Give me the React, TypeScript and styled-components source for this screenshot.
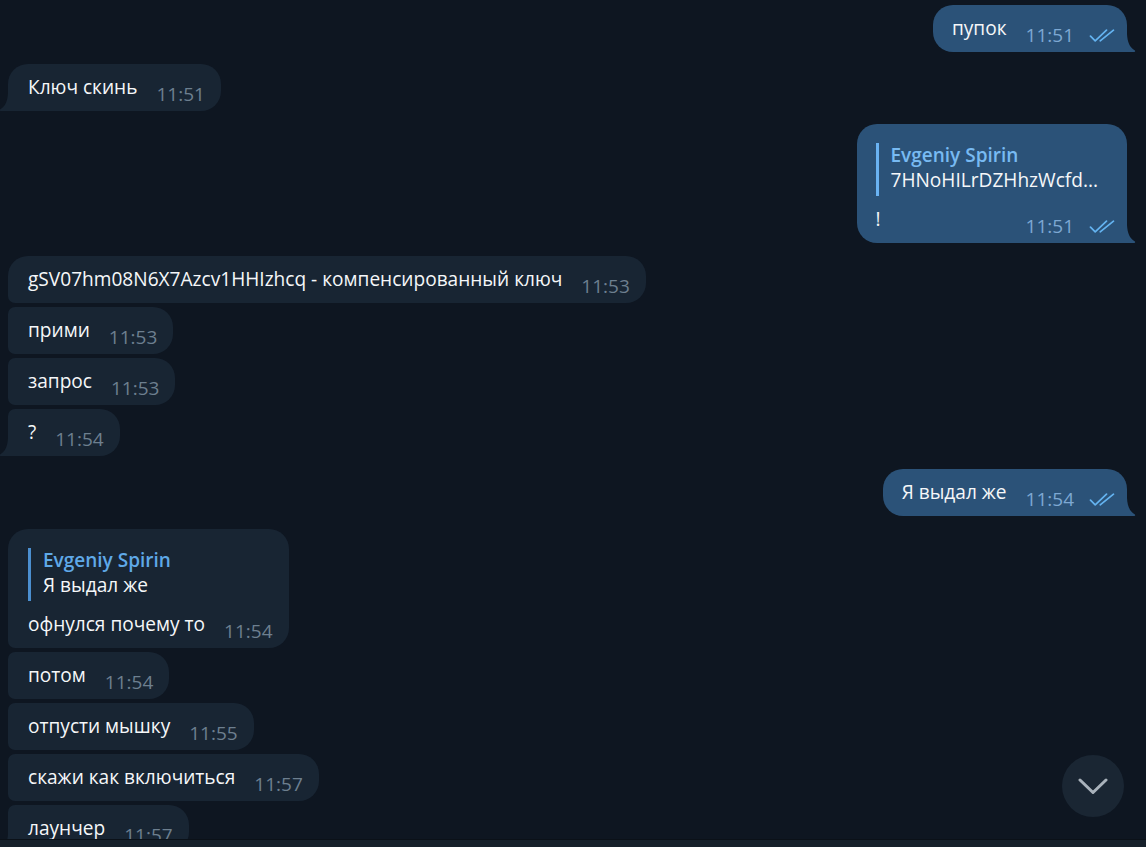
import React, { FC } from "react";
import styled, { createGlobalStyle } from "styled-components";

const GlobalStyle = createGlobalStyle`
  html, body {
    margin: 0;
    padding: 0;
    background: #0e1621;
  }
  body {
    font-family: "Open Sans", "Noto Sans", sans-serif;
    -webkit-font-smoothing: antialiased;
  }
`;

const Screen = styled.div`
  position: relative;
  height: 847px;
  display: flex;
  flex-direction: column;
  overflow: hidden;
  background: #0e1621;
`;

const History = styled.div`
  flex: 1;
  min-height: 0;
  overflow: hidden;
  display: flex;
  flex-direction: column;
  padding: 5px 19px 0 8px;
`;

const Composer = styled.div`
  height: 7px;
  flex-shrink: 0;
  background: #17212b;
  border-top: 1px solid #0b1118;
`;

const Row = styled.div<{ $out?: boolean; $gap: number }>`
  display: flex;
  flex-shrink: 0;
  justify-content: ${(p) => (p.$out ? "flex-end" : "flex-start")};
  margin-top: ${(p) => p.$gap}px;
`;

const BIG = 20;
const SMALL = 7;

const Bubble = styled.div<{ $out?: boolean; $first?: boolean; $last?: boolean }>`
  position: relative;
  background: ${(p) => (p.$out ? "#2b5278" : "#182533")};
  color: #f5f7f9;
  padding: 10px ${(p) => (p.$out ? 12 : 16)}px 7px ${(p) => (p.$out ? 19 : 20)}px;
  border-radius: ${(p) =>
    p.$out
      ? `${BIG}px ${BIG}px 0 ${BIG}px`
      : `${p.$first ? BIG : SMALL}px ${BIG}px ${BIG}px ${p.$last ? 0 : SMALL}px`};
`;

const Tail = styled.svg<{ $out?: boolean }>`
  position: absolute;
  bottom: 0;
  width: 9px;
  height: 18px;
  ${(p) => (p.$out ? "right: -9px;" : "left: -9px; transform: scaleX(-1);")}
`;

const Line = styled.div`
  display: flex;
  align-items: flex-end;
`;

const Text = styled.span`
  font-size: 19.1px;
  line-height: 26px;
  margin-bottom: 4px;
  white-space: nowrap;
`;

const Meta = styled.span<{ $out?: boolean }>`
  display: flex;
  align-items: flex-end;
  gap: 15px;
  margin-left: auto;
  padding-left: 19px;
  font-size: 19px;
  line-height: 20px;
  color: ${(p) => (p.$out ? "#7da8d3" : "#6d7f8f")};
  white-space: nowrap;
`;

const Checks = styled.svg`
  width: 26px;
  height: 13px;
  margin-bottom: 3px;
`;

const Reply = styled.div<{ $out?: boolean }>`
  display: flex;
  flex-direction: column;
  margin: 9px 0 10px;
  padding: 0 17px 3px 12px;
  border-left: 3px solid ${(p) => (p.$out ? "#6ab3f3" : "#4b8fd0")};
`;

const ReplyName = styled.span<{ $out?: boolean }>`
  font-size: 19px;
  font-weight: 600;
  line-height: 25px;
  color: ${(p) => (p.$out ? "#78baf2" : "#5fa9e8")};
  white-space: nowrap;
`;

const ReplyText = styled.span`
  font-size: 19.1px;
  line-height: 25px;
  white-space: nowrap;
`;

const ScrollDown = styled.button`
  position: absolute;
  right: 22px;
  bottom: 30px;
  width: 62px;
  height: 62px;
  border-radius: 50%;
  border: none;
  padding: 0;
  background: #1a2633;
  display: flex;
  align-items: center;
  justify-content: center;
`;

type Msg = {
  out?: boolean;
  text: string;
  time: string;
  gap: number;
  first?: boolean;
  last?: boolean;
  reply?: { name: string; text: string };
};

const messages: Msg[] = [
  { out: true, text: "пупок", time: "11:51", gap: 0 },
  { text: "Ключ скинь", time: "11:51", gap: 12, first: true, last: true },
  {
    out: true,
    text: "!",
    time: "11:51",
    gap: 13,
    reply: { name: "Evgeniy Spirin", text: "7HNoHILrDZHhzWcfd..." },
  },
  {
    text: "gSV07hm08N6X7Azcv1HHIzhcq - компенсированный ключ",
    time: "11:53",
    gap: 13,
    first: true,
  },
  { text: "прими", time: "11:53", gap: 4 },
  { text: "запрос", time: "11:53", gap: 4 },
  { text: "?", time: "11:54", gap: 4, last: true },
  { out: true, text: "Я выдал же", time: "11:54", gap: 13 },
  {
    text: "офнулся почему то",
    time: "11:54",
    gap: 13,
    first: true,
    reply: { name: "Evgeniy Spirin", text: "Я выдал же" },
  },
  { text: "потом", time: "11:54", gap: 4 },
  { text: "отпусти мышку", time: "11:55", gap: 4 },
  { text: "скажи как включиться", time: "11:57", gap: 4 },
  { text: "лаунчер", time: "11:57", gap: 4, last: true },
];

const DoubleCheck: FC = () => (
  <Checks viewBox="0 0 26 13" fill="none" stroke="#64b3f0" strokeWidth="1.7" strokeLinecap="round" strokeLinejoin="round">
    <path d="M1.5 7.2 L6.2 11.8 L17.5 1.2" />
    <path d="M11.2 11.8 L24.5 1.2" />
  </Checks>
);

const Message: FC<{ m: Msg }> = ({ m }) => {
  const hasTail = m.out || m.last;
  return (
    <Row $out={m.out} $gap={m.gap}>
      <Bubble $out={m.out} $first={m.first} $last={m.last}>
        {m.reply && (
          <Reply $out={m.out}>
            <ReplyName $out={m.out}>{m.reply.name}</ReplyName>
            <ReplyText>{m.reply.text}</ReplyText>
          </Reply>
        )}
        <Line>
          <Text>{m.text}</Text>
          <Meta $out={m.out}>
            {m.time}
            {m.out && <DoubleCheck />}
          </Meta>
        </Line>
        {hasTail && (
          <Tail $out={m.out} viewBox="0 0 9 18">
            <path
              d="M0 0 C0.4 8 2.6 13.2 7.6 16.3 C8.6 16.9 8.4 18 7.2 18 L0 18 Z"
              fill={m.out ? "#2b5278" : "#182533"}
            />
          </Tail>
        )}
      </Bubble>
    </Row>
  );
};

const App: FC = () => (
  <>
    <GlobalStyle />
    <Screen>
      <History>
        {messages.map((m, i) => (
          <Message key={i} m={m} />
        ))}
      </History>
      <Composer />
      <ScrollDown>
        <svg width="30" height="17" viewBox="0 0 30 17" fill="none" stroke="#a9b2bb" strokeWidth="3" strokeLinecap="round" strokeLinejoin="round">
          <path d="M2 2 L15 14.5 L28 2" />
        </svg>
      </ScrollDown>
    </Screen>
  </>
);

export default App;
